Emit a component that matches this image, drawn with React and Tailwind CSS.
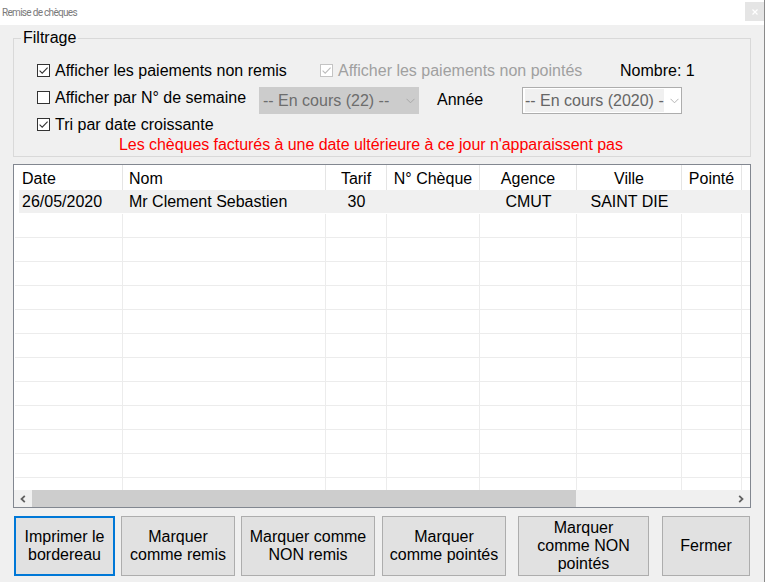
import React from "react";

function Check({ checked, disabled }) {
  return (
    <span
      className={`w-[13px] h-[13px] border ${
        disabled ? "border-[#c4c4c4]" : "border-[#333333]"
      } bg-white flex items-center justify-center shrink-0`}
    >
      {checked && (
        <svg width="11" height="11" viewBox="0 0 11 11">
          <path
            d="M1.6 5.6 L4.2 8.2 L9.6 2.6"
            fill="none"
            stroke={disabled ? "#bcbcbc" : "#333333"}
            strokeWidth="1.1"
          />
        </svg>
      )}
    </span>
  );
}

function Chevron({ color }) {
  return (
    <svg width="9" height="6" viewBox="0 0 9 6">
      <path d="M0.5 0.8 L4.5 4.8 L8.5 0.8" fill="none" stroke={color} strokeWidth="1" />
    </svg>
  );
}

const cols = [
  { k: "Date", cls: "w-[109px] justify-start pl-[8px]" },
  { k: "Nom", cls: "w-[203px] justify-start pl-[6px]" },
  { k: "Tarif", cls: "w-[61px] justify-center" },
  { k: "N° Chèque", cls: "w-[93px] justify-center" },
  { k: "Agence", cls: "w-[97px] justify-center" },
  { k: "Ville", cls: "w-[105px] justify-center" },
  { k: "Pointé", cls: "w-[60px] justify-center" },
];

const rowCells = [
  { v: "26/05/2020", cls: "w-[104px] justify-start pl-[3px]" },
  { v: "Mr Clement Sebastien", cls: "w-[203px] justify-start pl-[6px]" },
  { v: "30", cls: "w-[61px] justify-center" },
  { v: "", cls: "w-[93px] justify-center" },
  { v: "CMUT", cls: "w-[97px] justify-center" },
  { v: "SAINT DIE", cls: "w-[105px] justify-center" },
  { v: "", cls: "w-[60px] justify-center" },
];

const emptyCols = [
  "w-[109px]",
  "w-[203px]",
  "w-[61px]",
  "w-[93px]",
  "w-[97px]",
  "w-[105px]",
  "w-[60px]",
];

function Btn({ children, cls }) {
  return (
    <div
      className={`h-[60px] flex items-center justify-center text-center leading-[18px] text-black bg-[#e1e1e1] ${cls}`}
    >
      <span>{children}</span>
    </div>
  );
}

export default function App() {
  return (
    <div className="w-[766px] h-[582px] bg-white overflow-hidden">
      <div className="w-[765px] h-[582px] bg-[#f0f0f0] border-r border-[#8a8a8a] flex flex-col font-['Liberation_Sans',Arial,sans-serif] text-[16px] text-black">
        {/* Title bar */}
        <div className="h-[25px] bg-white flex items-start justify-between shrink-0">
          <span className="pl-[2px] h-[25px] flex items-center font-['Roboto',sans-serif] text-[10px] tracking-[-0.7px] text-[#7a7a7a]">
            Remise de chèques
          </span>
          <div className="mt-[2px] w-[19px] h-[19px] bg-[#e5e5e5] flex items-center justify-center">
            <svg width="6" height="6" viewBox="0 0 6 6">
              <path d="M0.5 0.5 L5.5 5.5 M5.5 0.5 L0.5 5.5" stroke="#ffffff" strokeWidth="1.2" />
            </svg>
          </div>
        </div>

        {/* Filtrage */}
        <fieldset className="ml-[13px] mt-[4px] w-[738px] h-[128px] border border-[#d9d9d9] p-0 m-0 shrink-0">
          <legend className="ml-[7px] px-[2px] leading-[18px]">Filtrage</legend>
          <div className="pt-[10px] pl-[23px]">
            <div className="flex items-center h-[27px]">
              <div className="w-[283px] flex items-center gap-[5px]">
                <Check checked />
                <span className="whitespace-nowrap">Afficher les paiements non remis</span>
              </div>
              <div className="w-[300px] flex items-center gap-[5px]">
                <Check checked disabled />
                <span className="whitespace-nowrap text-[#a0a0a0]">
                  Afficher les paiements non pointés
                </span>
              </div>
              <span className="whitespace-nowrap">Nombre: 1</span>
            </div>
            <div className="flex items-start h-[27px]">
              <div className="w-[222px] h-[27px] flex items-center gap-[5px]">
                <Check />
                <span className="whitespace-nowrap">Afficher par N° de semaine</span>
              </div>
              <div className="mt-[3px] w-[160px] h-[27px] bg-[#cccccc] flex items-center justify-between overflow-hidden">
                <span className="pl-[4px] whitespace-nowrap text-[#6d6d6d] leading-[18px] pt-[1px]">
                  -- En cours (22) --
                </span>
                <span className="pr-[4px] pl-[2px] flex items-center">
                  <Chevron color="#a8a8a8" />
                </span>
              </div>
              <span className="mt-[2px] h-[27px] w-[103px] pl-[18px] flex items-center">Année</span>
              <div className="mt-[3px] w-[160px] h-[27px] bg-white border border-[#adadad] flex items-center">
                <div className="ml-[2px] w-[139px] h-[23px] bg-[#f0f0f0] overflow-hidden flex items-center">
                  <span className="whitespace-nowrap text-[#666666] leading-[18px] pt-[1px]">
                    -- En cours (2020) -
                  </span>
                </div>
                <span className="ml-[6px] flex items-center">
                  <Chevron color="#b4b4b4" />
                </span>
              </div>
            </div>
            <div className="flex items-center h-[27px]">
              <div className="flex items-center gap-[5px]">
                <Check checked />
                <span className="whitespace-nowrap">Tri par date croissante</span>
              </div>
            </div>
            <div className="-mt-[2px] h-[18px] leading-[18px] pl-[82px] text-[#ff0000] whitespace-nowrap tracking-[-0.05px]">
              Les chèques facturés à une date ultérieure à ce jour n'apparaissent pas
            </div>
          </div>
        </fieldset>

        {/* Table */}
        <div className="ml-[13px] mt-[7px] w-[738px] h-[344px] border border-[#828790] bg-white flex flex-col shrink-0">
          <div className="h-[25px] flex shrink-0">
            {cols.map((c) => (
              <div
                key={c.k}
                className={`${c.cls} h-full flex items-center pt-[2px] border-r border-[#e5e5e5] whitespace-nowrap`}
              >
                {c.k}
              </div>
            ))}
          </div>
          <div className="flex-1 overflow-hidden">
            <div className="h-[24px] border-b border-white pl-[5px]">
              <div className="h-full flex bg-[#f0f0f0]">
                {rowCells.map((c, i) => (
                  <div key={i} className={`${c.cls} h-full flex items-center pt-[1px] whitespace-nowrap`}>
                    {c.v}
                  </div>
                ))}
              </div>
            </div>
            {Array.from({ length: 13 }).map((_, r) => (
              <div key={r} className="h-[24px] flex border-b border-[#ececec] ml-[1px]">
                {emptyCols.map((w, i) => (
                  <div key={i} className={`${w} h-full border-r border-[#ececec] ${i === 0 ? "-ml-[1px]" : ""}`} />
                ))}
              </div>
            ))}
          </div>
          <div className="h-[17px] flex shrink-0 bg-[#f0f0f0]">
            <div className="w-[18px] h-full flex items-center justify-center">
              <svg width="6" height="8" viewBox="0 0 6 8">
                <path d="M4.8 0.8 L1.5 4 L4.8 7.2" fill="none" stroke="#606060" strokeWidth="1.8" />
              </svg>
            </div>
            <div className="w-[544px] h-full bg-[#cdcdcd]" />
            <div className="flex-1" />
            <div className="w-[18px] h-full flex items-center justify-center">
              <svg width="6" height="8" viewBox="0 0 6 8">
                <path d="M1.2 0.8 L4.5 4 L1.2 7.2" fill="none" stroke="#606060" strokeWidth="1.8" />
              </svg>
            </div>
          </div>
        </div>

        {/* Buttons */}
        <div className="mt-[8px] pl-[14px] flex shrink-0">
          <Btn cls="w-[101px] border-2 border-[#0078d7]">
            Imprimer le
            <br />
            bordereau
          </Btn>
          <Btn cls="ml-[6px] w-[114px] border border-[#adadad]">
            Marquer
            <br />
            comme remis
          </Btn>
          <Btn cls="ml-[6px] w-[134px] border border-[#adadad]">
            Marquer comme
            <br />
            NON remis
          </Btn>
          <Btn cls="ml-[7px] w-[124px] border border-[#adadad]">
            Marquer
            <br />
            comme pointés
          </Btn>
          <Btn cls="ml-[12px] w-[131px] border border-[#adadad]">
            Marquer
            <br />
            comme NON
            <br />
            pointés
          </Btn>
          <Btn cls="ml-[13px] w-[88px] border border-[#adadad]">Fermer</Btn>
        </div>
      </div>
    </div>
  );
}
